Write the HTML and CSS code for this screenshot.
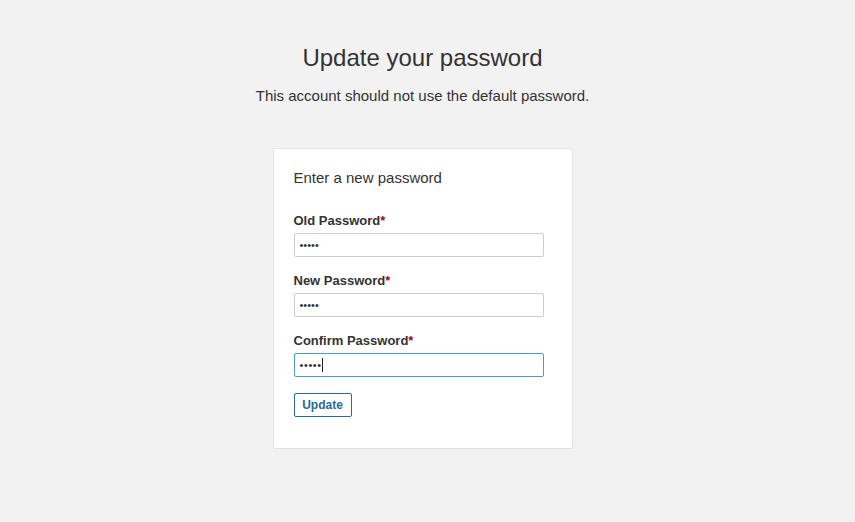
FILE: index.html
```html
<!DOCTYPE html>
<html lang="en">
<head>
<meta charset="utf-8">
<title>Update your password</title>
<link rel="stylesheet" href="styles.css">
</head>
<body>
<main class="page">
  <h1 class="title">Update your password</h1>
  <p class="subtitle">This account should not use the default password.</p>
  <form class="card">
    <h2 class="card-heading">Enter a new password</h2>
    <div class="field">
      <label class="label" for="old">Old Password<span class="req">*</span></label>
      <input class="input" id="old" type="password" value="abcde">
    </div>
    <div class="field">
      <label class="label" for="new">New Password<span class="req">*</span></label>
      <input class="input" id="new" type="password" value="abcde">
    </div>
    <div class="field">
      <label class="label" for="confirm">Confirm Password<span class="req">*</span></label>
      <div class="input input-focused"><span class="dots">•••••</span><span class="caret"></span></div>
    </div>
    <button class="btn" type="button">Update</button>
  </form>
</main>
</body>
</html>
```
FILE: styles.css
```css
html, body {
  margin: 0;
  padding: 0;
  background: #f2f2f2;
  color: #333;
  font-family: "Liberation Sans", Arial, sans-serif;
}
.page {
  display: flex;
  flex-direction: column;
  align-items: center;
  padding: 44px 10px 0 0;
}
.title {
  margin: 0;
  font-size: 24px;
  line-height: 28px;
  font-weight: normal;
  color: #333;
}
.subtitle {
  margin: 15px 0 0;
  font-size: 15px;
  line-height: 17px;
  color: #333;
}
.card {
  margin-top: 44px;
  box-sizing: border-box;
  width: 300px;
  background: #fff;
  border: 1px solid #e2e2e2;
  border-radius: 2px;
  padding: 20px 20px 31px;
  display: flex;
  flex-direction: column;
  align-items: flex-start;
}
.card-heading {
  margin: 0 0 27px;
  font-size: 15px;
  line-height: 17px;
  font-weight: normal;
  color: #333;
}
.field {
  display: flex;
  flex-direction: column;
  gap: 5px;
  margin-bottom: 16px;
}
.label {
  font-size: 13px;
  line-height: 15px;
  font-weight: bold;
  color: #333;
}
.req {
  color: #a0002a;
}
.input {
  box-sizing: border-box;
  width: 250px;
  height: 24px;
  margin: 0;
  padding: 0 5px;
  border: 1px solid #cccccc;
  border-radius: 2px;
  background: #fff;
  font-family: "Liberation Sans", Arial, sans-serif;
  font-size: 11px;
  color: #333;
  letter-spacing: 0;
  outline: none;
}
.input-focused {
  display: flex;
  align-items: center;
  border-color: #4b9ad4;
}
.dots {
  font-size: 11px;
  letter-spacing: 0.6px;
  line-height: 1;
}
.caret {
  width: 1px;
  height: 14px;
  background: #222;
}
.btn {
  box-sizing: border-box;
  width: 58px;
  height: 24px;
  padding: 0;
  border: 1px solid #2a6a98;
  border-radius: 2px;
  background: #fff;
  color: #2a6a98;
  font-family: "Liberation Sans", Arial, sans-serif;
  font-size: 12px;
  font-weight: bold;
}
```
